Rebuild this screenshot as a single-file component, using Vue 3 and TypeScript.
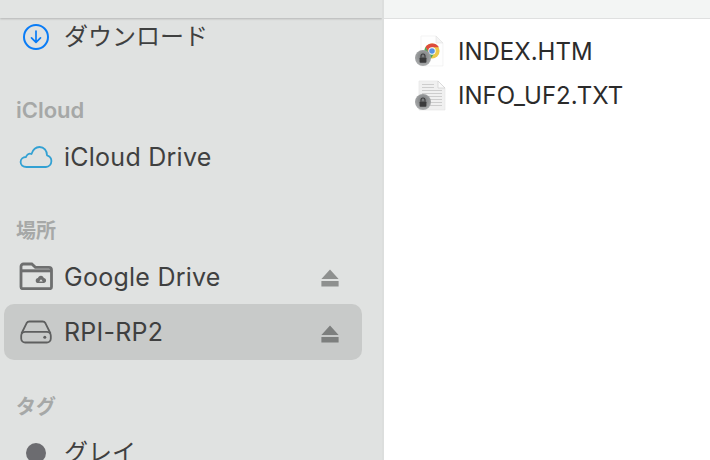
<script setup lang="ts">
const files = [
  { name: 'INDEX.HTM', kind: 'html' },
  { name: 'INFO_UF2.TXT', kind: 'text' },
]
const textLines = [5, 8, 11, 14, 17, 20, 23, 26]
</script>

<template>
  <div class="window">
    <aside class="sidebar">
      <div class="sidebar-top"></div>
      <div class="sidebar-list">
        <div class="row first">
          <span class="icon">
            <svg width="30" height="30" viewBox="0 0 30 30" fill="none" stroke="#0a7cf6">
              <circle cx="15" cy="15" r="12" stroke-width="2" />
              <path d="M15 9V20M10.500 15.800 15 20.300l4.500-4.500" stroke-width="1.700" stroke-linecap="round" stroke-linejoin="round" />
            </svg>
          </span>
          <span class="label">ダウンロード</span>
        </div>

        <div class="heading latin">iCloud</div>
        <div class="row">
          <span class="icon">
            <svg width="34" height="24" viewBox="0 0 34 24" fill="none" stroke="#33a1d3" stroke-width="1.800" stroke-linejoin="round">
              <path d="M7.500 22C3.700 22 1.600 19.600 1.600 17c0-3 2.400-5 5.400-5 .6-2.500 3-4 5.500-3C14 4.500 17 2 20.500 2 25 2 28 5.500 28 10.300c2.900.9 4.400 3.300 4.400 5.800 0 3.200-2.400 5.900-5.400 5.900Z" />
            </svg>
          </span>
          <span class="label latin">iCloud Drive</span>
        </div>

        <div class="heading places">場所</div>
        <div class="row">
          <span class="icon">
            <svg width="34" height="28" viewBox="0 0 34 28" fill="none">
              <path d="M2 25V4.500C2 3 3 2 4.500 2h8.300l3.600 3.300h13.500c1.500 0 2.600 1 2.600 2.600V25c0 1-.8 1.700-1.700 1.700H3.700C2.800 26.700 2 26 2 25Z" stroke="#6e6f6f" stroke-width="2.800" />
              <path d="M2 8.800h30" stroke="#6e6f6f" stroke-width="3" />
              <path fill-rule="evenodd" d="M22 13.800c1.500 0 2.600 1 2.800 2.300 1.300.1 2.300 1.100 2.300 2.500 0 1.400-1.100 2.500-2.400 2.500h-5.700c-1.300 0-2.300-1.100-2.300-2.400 0-1.400 1-2.500 2.300-2.600.2-1.300 1.300-2.300 3-2.300Zm0 3.500-1.800 2.300h3.600Z" fill="#6e6f6f" />
            </svg>
          </span>
          <span class="label latin nudged">Google Drive</span>
          <svg class="eject" width="18" height="18" viewBox="0 0 18 18"><path d="M9 .5 17.600 10H.4Z M.4 12H17.600V17.500H.4Z" fill="#8e908f" /></svg>
        </div>
        <div class="row selected">
          <span class="icon">
            <svg width="32" height="24" viewBox="0 0 32 24" fill="none" stroke="#5e5f5f" stroke-width="1.800">
              <path d="M1.500 13.500 6.500 3.300C7.200 2 8 1.500 9.500 1.500h13c1.500 0 2.300.5 3 1.800l5 10.200" />
              <rect x="1.200" y="11.800" width="29.600" height="10.700" rx="4" />
              <circle cx="24.800" cy="17.200" r="1.500" fill="#5e5f5f" stroke="none" />
            </svg>
          </span>
          <span class="label latin">RPI-RP2</span>
          <svg class="eject" width="18" height="18" viewBox="0 0 18 18"><path d="M9 .5 17.600 10H.4Z M.4 12H17.600V17.500H.4Z" fill="#7d7f7e" /></svg>
        </div>

        <div class="heading tags">タグ</div>
        <div class="row">
          <span class="icon"><span class="tag-dot"></span></span>
          <span class="label nudged">グレイ</span>
        </div>
      </div>
    </aside>

    <main class="content">
      <div class="content-top"></div>
      <ul class="files">
        <li v-for="file in files" :key="file.name" class="file">
          <svg class="file-icon" width="32" height="34" viewBox="0 0 32 34">
            <defs>
              <radialGradient id="lock-bg" cx="50%" cy="40%" r="65%">
                <stop offset="0" stop-color="#77797b" />
                <stop offset="1" stop-color="#b0b2b3" />
              </radialGradient>
            </defs>
            <template v-if="file.kind === 'html'">
              <path d="M7 1h15l7 7v23H7Z" fill="#fefefe" stroke="#efefef" stroke-width=".7" />
              <path d="M22 1v7h7Z" fill="#f4f4f4" stroke="#dedede" stroke-width=".5" />
              <circle cx="18" cy="16" r="7.600" fill="#ecc94a" />
              <path d="M18 8.400a7.600 7.600 0 0 0-6.500 3.700l3.600 6.300 2.900-6.100h7a7.600 7.600 0 0 0-7-3.900Z" fill="#dd4b3c" />
              <path d="M11.500 12.100a7.600 7.600 0 0 0 5.400 11.400l3.700-5.700-5.400.6Z" fill="#4ba65b" />
              <circle cx="18" cy="16" r="3.700" fill="#fff" />
              <circle cx="18" cy="16" r="2.800" fill="#5793e3" />
            </template>
            <template v-else>
              <path d="M5 2h19l7 7v22H5Z" fill="#f0f0f0" stroke="#e6e6e6" stroke-width=".7" />
              <rect
                v-for="(y, i) in textLines"
                :key="i"
                x="8"
                :y="y"
                :width="i < 2 ? 12 : 20"
                height="1"
                fill="#cdcdcd"
              />
              <path d="M24 2v7h7Z" fill="#fafafa" stroke="#c9c9c9" stroke-width=".6" />
            </template>
            <circle cx="9" cy="23" r="8" fill="url(#lock-bg)" />
            <rect x="5.600" y="22.500" width="6.800" height="5.200" rx=".8" fill="#3a3a3b" />
            <path d="M7 22.500V21a2 2 0 0 1 4 0v1.500" fill="none" stroke="#3a3a3b" stroke-width="1.100" />
          </svg>
          <span class="file-name">{{ file.name }}</span>
        </li>
      </ul>
    </main>
  </div>
</template>

<style scoped>
.window {
  display: flex;
  width: 710px;
  height: 460px;
  overflow: hidden;
  font-family: Inter, "Noto Sans CJK JP", sans-serif;
}
.sidebar {
  display: flex;
  flex-direction: column;
  flex: none;
  width: 384px;
  height: 460px;
  box-sizing: border-box;
  background: #e0e2e1;
  border-right: 2px solid #dcdedd;
  overflow: hidden;
}
.sidebar-top {
  position: relative;
  z-index: 1;
  flex: none;
  height: 18px;
  background: #e2e4e3;
  box-shadow: 0 1px 2px rgba(0, 0, 0, 0.2);
}
.sidebar-list {
  flex: none;
  margin: -10px 20px 0 4px;
  display: flex;
  flex-direction: column;
}
.row {
  flex: none;
  display: flex;
  align-items: center;
  height: 56px;
  padding: 0 24px 0 14px;
  border-radius: 10px;
}
.row.first {
  height: 57px;
}
.row.selected {
  background: #c8cac9;
}
.icon {
  flex: none;
  display: flex;
  align-items: center;
  justify-content: center;
  width: 36px;
  margin-right: 10px;
}
.label {
  flex: 1;
  font-size: 24px;
  line-height: 30px;
  color: #3f4040;
  white-space: nowrap;
}
.label.latin {
  font-size: 25px;
  letter-spacing: 0.25px;
}
.label.nudged {
  padding-top: 2px;
}
.eject {
  flex: none;
  margin-top: 3px;
  margin-right: -1px;
}
.heading {
  flex: none;
  height: 38px;
  padding: 26px 0 0 12px;
  font-size: 20px;
  line-height: 38px;
  font-weight: 600;
  color: #a6a8a7;
}
.heading.latin {
  font-size: 22px;
}
.heading.places {
  height: 36px;
  padding-top: 27px;
}
.heading.tags {
  height: 36px;
  padding-top: 28px;
}
.tag-dot {
  display: block;
  width: 20px;
  height: 20px;
  margin-top: 2px;
  border-radius: 50%;
  background: #6c6c70;
}
.content {
  flex: 1;
  display: flex;
  flex-direction: column;
  background: #fff;
}
.content-top {
  flex: none;
  height: 18px;
  background: #f3f5f4;
  border-bottom: 1px solid #dfe0e0;
}
.files {
  list-style: none;
  margin: 0;
  padding: 11px 0 0 30px;
}
.file {
  display: flex;
  align-items: center;
  height: 44px;
}
.file-icon {
  flex: none;
  margin-right: 12px;
  filter: blur(0.4px);
}
.file-name {
  font-size: 24px;
  line-height: 30px;
  color: #2b2b2b;
  white-space: nowrap;
}
</style>
